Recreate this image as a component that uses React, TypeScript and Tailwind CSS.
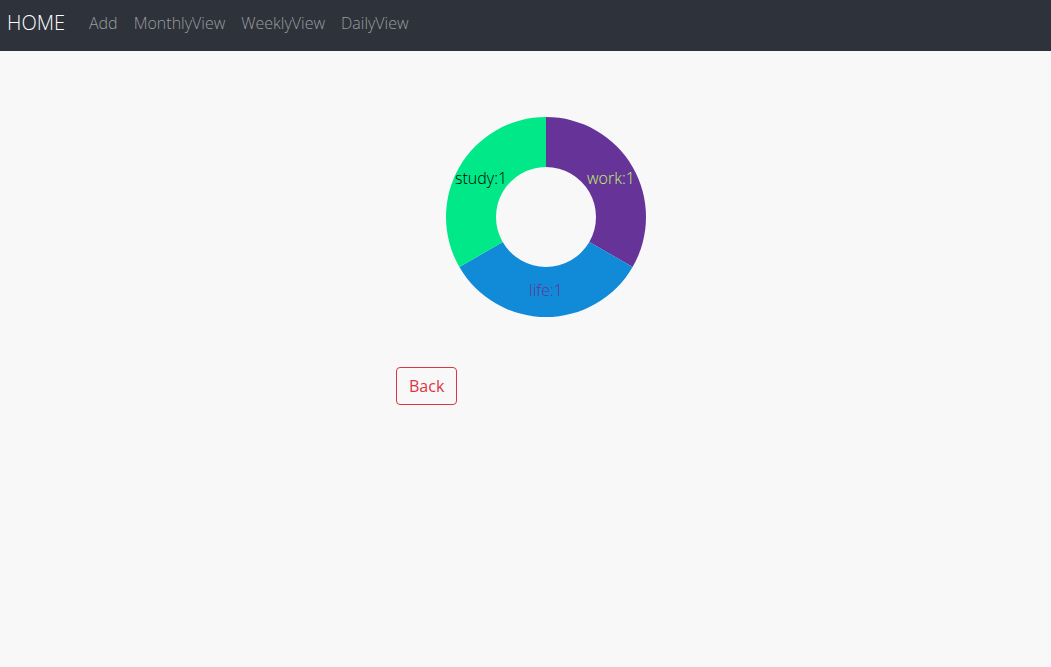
import React from 'react';

const cx = 150;
const cy = 150;
const R = 100;
const r = 50;

const slices = [
  { label: 'work:1', from: -90, to: 30, fill: '#663399', text: '#bdf765' },
  { label: 'life:1', from: 30, to: 150, fill: '#118ad8', text: '#663399' },
  { label: 'study:1', from: 150, to: 270, fill: '#00e887', text: '#000000' },
];

const pt = (a: number, rad: number) => {
  const t = (a * Math.PI) / 180;
  return [cx + rad * Math.cos(t), cy + rad * Math.sin(t)];
};

const arc = (from: number, to: number) => {
  const [x1, y1] = pt(from, R);
  const [x2, y2] = pt(to, R);
  const [x3, y3] = pt(to, r);
  const [x4, y4] = pt(from, r);
  return `M${x1} ${y1} A${R} ${R} 0 0 1 ${x2} ${y2} L${x3} ${y3} A${r} ${r} 0 0 0 ${x4} ${y4} Z`;
};

const Donut = () => (
  <svg width={300} height={300} viewBox="0 0 300 300">
    {slices.map((s) => (
      <path key={s.label} d={arc(s.from, s.to)} fill={s.fill} />
    ))}
    {slices.map((s) => {
      const [x, y] = pt((s.from + s.to) / 2, 75);
      return (
        <text
          key={s.label + 't'}
          x={x}
          y={y - 2}
          textAnchor="middle"
          dominantBaseline="central"
          fill={s.text}
          fontSize={16}
          fontWeight={300}
          fontFamily="'Open Sans', sans-serif"
        >
          {s.label}
        </text>
      );
    })}
  </svg>
);

export default function App() {
  return (
    <div className="min-h-screen bg-[#f8f8f8] font-['Open_Sans',sans-serif] font-light">
      {/* Navbar */}
      <nav className="h-[51px] bg-[#2e323a] flex items-center pl-[7px] pb-[6px]">
        <span className="text-white text-[20px] leading-[30px] mr-6">HOME</span>
        <div className="flex items-center gap-4 text-[16px] text-[#9a9da1]">
          <span>Add</span>
          <span>MonthlyView</span>
          <span>WeeklyView</span>
          <span>DailyView</span>
        </div>
      </nav>

      <div className="pl-[396px] pt-4">
        <Donut />
        <button className="border border-[#dc3545] text-[#dc3545] rounded px-3 py-[6px] text-[16px] leading-6 font-normal">
          Back
        </button>
      </div>
    </div>
  );
}
